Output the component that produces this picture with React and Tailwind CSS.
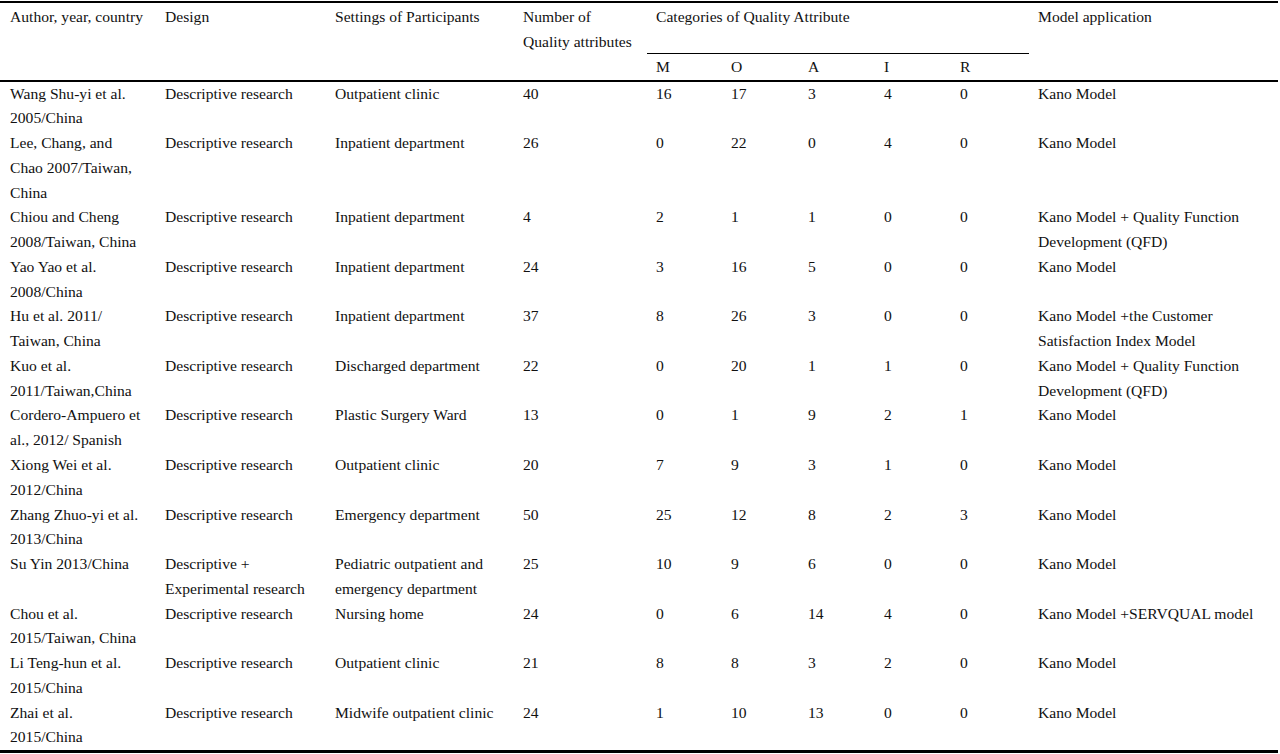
import React from 'react';

const rows = [
  { author: ['Wang Shu-yi et al.', '2005/China'], design: ['Descriptive research'], setting: ['Outpatient clinic'], n: '40', m: '16', o: '17', a: '3', i: '4', r: '0', model: ['Kano Model'] },
  { author: ['Lee, Chang, and', 'Chao 2007/Taiwan,', 'China'], design: ['Descriptive research'], setting: ['Inpatient department'], n: '26', m: '0', o: '22', a: '0', i: '4', r: '0', model: ['Kano Model'] },
  { author: ['Chiou and Cheng', '2008/Taiwan, China'], design: ['Descriptive research'], setting: ['Inpatient department'], n: '4', m: '2', o: '1', a: '1', i: '0', r: '0', model: ['Kano Model + Quality Function', 'Development (QFD)'] },
  { author: ['Yao Yao et al.', '2008/China'], design: ['Descriptive research'], setting: ['Inpatient department'], n: '24', m: '3', o: '16', a: '5', i: '0', r: '0', model: ['Kano Model'] },
  { author: ['Hu et al. 2011/', 'Taiwan, China'], design: ['Descriptive research'], setting: ['Inpatient department'], n: '37', m: '8', o: '26', a: '3', i: '0', r: '0', model: ['Kano Model +the Customer', 'Satisfaction Index Model'] },
  { author: ['Kuo et al.', '2011/Taiwan,China'], design: ['Descriptive research'], setting: ['Discharged department'], n: '22', m: '0', o: '20', a: '1', i: '1', r: '0', model: ['Kano Model + Quality Function', 'Development (QFD)'] },
  { author: ['Cordero-Ampuero et', 'al., 2012/ Spanish'], design: ['Descriptive research'], setting: ['Plastic Surgery Ward'], n: '13', m: '0', o: '1', a: '9', i: '2', r: '1', model: ['Kano Model'] },
  { author: ['Xiong Wei et al.', '2012/China'], design: ['Descriptive research'], setting: ['Outpatient clinic'], n: '20', m: '7', o: '9', a: '3', i: '1', r: '0', model: ['Kano Model'] },
  { author: ['Zhang Zhuo-yi et al.', '2013/China'], design: ['Descriptive research'], setting: ['Emergency department'], n: '50', m: '25', o: '12', a: '8', i: '2', r: '3', model: ['Kano Model'] },
  { author: ['Su Yin 2013/China'], design: ['Descriptive +', 'Experimental research'], setting: ['Pediatric outpatient and', 'emergency department'], n: '25', m: '10', o: '9', a: '6', i: '0', r: '0', model: ['Kano Model'] },
  { author: ['Chou et al.', '2015/Taiwan, China'], design: ['Descriptive research'], setting: ['Nursing home'], n: '24', m: '0', o: '6', a: '14', i: '4', r: '0', model: ['Kano Model +SERVQUAL model'] },
  { author: ['Li Teng-hun et al.', '2015/China'], design: ['Descriptive research'], setting: ['Outpatient clinic'], n: '21', m: '8', o: '8', a: '3', i: '2', r: '0', model: ['Kano Model'] },
  { author: ['Zhai et al.', '2015/China'], design: ['Descriptive research'], setting: ['Midwife outpatient clinic'], n: '24', m: '1', o: '10', a: '13', i: '0', r: '0', model: ['Kano Model'] },
];

const Lines = ({ lines }) =>
  lines.map((l, k) => (
    <React.Fragment key={k}>
      {k > 0 && <br />}
      {l}
    </React.Fragment>
  ));

const td = 'align-top pl-[9px] p-0 whitespace-nowrap font-normal text-left';

export default function App() {
  return (
    <div className="w-[1278px] bg-white pt-px text-[#111] text-[15.6px] leading-[24.76px] font-['Liberation_Serif','Times_New_Roman',serif]">
      <div className="border-t-2 border-b-[3px] border-black">
        <table className="w-full table-fixed border-collapse">
          <colgroup>
            <col className="w-[156px]" />
            <col className="w-[170px]" />
            <col className="w-[188px]" />
            <col className="w-[133px]" />
            <col className="w-[75px]" />
            <col className="w-[77px]" />
            <col className="w-[76px]" />
            <col className="w-[76px]" />
            <col className="w-[78px]" />
            <col />
          </colgroup>
          <thead>
            <tr className="h-[50px]">
              <th rowSpan={2} className={`${td} pl-[10px] pt-[2px] border-b-2 border-black`}>Author, year, country</th>
              <th rowSpan={2} className={`${td} pt-[2px] border-b-2 border-black`}>Design</th>
              <th rowSpan={2} className={`${td} pt-[2px] border-b-2 border-black`}>Settings of Participants</th>
              <th rowSpan={2} className={`${td} pt-[2px] border-b-2 border-black`}>
                Number of
                <br />
                Quality attributes
              </th>
              <th colSpan={5} className={`${td} pt-[2px] border-b-[1.5px] border-black`}>Categories of Quality Attribute</th>
              <th rowSpan={2} className={`${td} pt-[2px] border-b-2 border-black`}>Model application</th>
            </tr>
            <tr className="h-[25px] leading-[26px]">
              {['M', 'O', 'A', 'I', 'R'].map((c) => (
                <th key={c} className={`${td} border-b-2 border-black`}>{c}</th>
              ))}
            </tr>
          </thead>
          <tbody>
            {rows.map((r, k) => (
              <tr key={k}>
                <td className={`${td} pl-[10px]`}><Lines lines={r.author} /></td>
                <td className={td}><Lines lines={r.design} /></td>
                <td className={td}><Lines lines={r.setting} /></td>
                <td className={td}>{r.n}</td>
                <td className={td}>{r.m}</td>
                <td className={td}>{r.o}</td>
                <td className={td}>{r.a}</td>
                <td className={td}>{r.i}</td>
                <td className={td}>{r.r}</td>
                <td className={td}><Lines lines={r.model} /></td>
              </tr>
            ))}
          </tbody>
        </table>
      </div>
    </div>
  );
}
